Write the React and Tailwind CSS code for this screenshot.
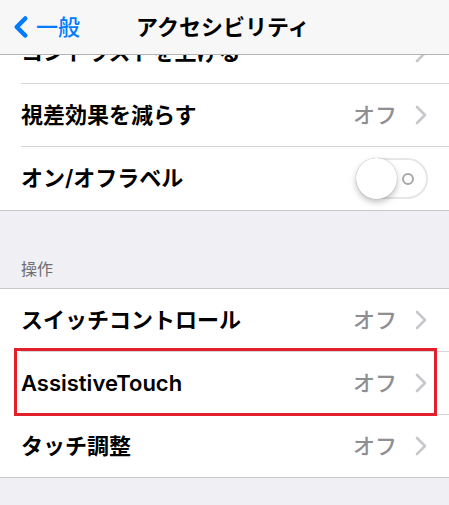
import { ChevronLeft } from "lucide-react";

const font = { fontFamily: '"Inter", "Noto Sans CJK JP", sans-serif' };

function Chevron() {
  return (
    <svg width="12" height="20" viewBox="0 0 12 20" className="shrink-0">
      <path d="M2 2 L10 10 L2 18" fill="none" stroke="#c7c7cc" strokeWidth="2.6" strokeLinecap="round" strokeLinejoin="round" />
    </svg>
  );
}

function Row({ label, value, last, h = "h-[63px]", children }) {
  return (
    <div className="bg-white pl-[21px]">
      <div
        className={`flex ${h} items-center pr-[22px] ${last ? "" : "border-b border-[#d6d6da]"}`}
      >
        <div className="flex-1 text-[22px] font-semibold text-black">{label}</div>
        {children ?? (
          <div className="flex items-center gap-[18px]">
            <span className="text-[22px] font-medium text-[#8e8e93]">{value}</span>
            <Chevron />
          </div>
        )}
      </div>
    </div>
  );
}

function Toggle() {
  return (
    <div className="relative mr-[-1px] flex h-[41px] w-[72px] items-center rounded-full border-2 border-[#e6e6e6] bg-white">
      <div className="absolute left-[-2px] top-[-2px] h-[41px] w-[41px] rounded-full bg-white shadow-[0_3px_6px_rgba(0,0,0,0.25),0_0_1px_rgba(0,0,0,0.3)]" />
      <div className="ml-auto mr-[12px] h-[12px] w-[12px] rounded-full border-2 border-[#a8a8a8]" />
    </div>
  );
}

export default function App() {
  return (
    <div className="h-[505px] w-[449px] overflow-hidden bg-[#efeff4]" style={font}>
      {/* nav bar */}
      <div className="relative flex h-[55px] items-center border-b border-[#b4b4b4] bg-[#f7f7f7]">
        <div className="flex items-center pl-[8px] text-[#007aff]">
          <ChevronLeft size={34} strokeWidth={3.2} className="ml-[-4px]" />
          <span className="ml-[-2px] text-[22px] font-medium">一般</span>
        </div>
        <div className="absolute left-[136px] text-[22px] font-semibold text-black">アクセシビリティ</div>
      </div>

      {/* row scrolled under the nav bar */}
      <div className="bg-white pl-[21px]">
        <div className="flex h-[29px] flex-col justify-end overflow-hidden border-b border-[#d6d6da]">
          <div className="mb-[-1px] flex h-[63px] shrink-0 items-center pr-[22px]">
            <div className="flex-1 text-[22px] font-semibold text-black">コントラストを上げる</div>
            <Chevron />
          </div>
        </div>
      </div>

      <Row label="視差効果を減らす" value="オフ" />
      <div className="border-b border-[#c8c7cc]">
        <Row label="オン/オフラベル" last>
          <Toggle />
        </Row>
      </div>

      <div className="flex h-[77px] items-end pb-[7px] pl-[21px] text-[16px] text-[#6d6d72]">操作</div>

      <div className="border-t border-[#c8c7cc]">
        <Row label="スイッチコントロール" value="オフ" />
        <div className="relative">
          <Row label="AssistiveTouch" value="オフ" />
          <div className="pointer-events-none absolute left-[14px] top-[-4px] h-[68px] w-[423px] border-[3px] border-[#e2202c]" />
        </div>
        <div className="border-b border-[#c8c7cc]">
          <Row label="タッチ調整" value="オフ" last h="h-[62px]" />
        </div>
      </div>
    </div>
  );
}
